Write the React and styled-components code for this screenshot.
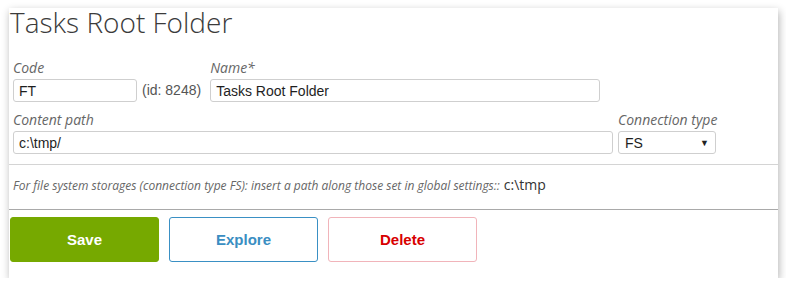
import React from 'react'
import styled, { createGlobalStyle } from 'styled-components';

const GlobalStyle = createGlobalStyle`
  body {
    margin: 0;
    background: #fff;
    font-family: "Open Sans", sans-serif;
  }
`

const App = () => {
  return (
    <>
      <GlobalStyle />
      <Card>
        <Title>Tasks Root Folder</Title>

        <FieldRow top="22px">
          <Field width="124px">
            <Label>Code</Label>
            <TextInput defaultValue='FT' readOnly />
          </Field>
          <IdNote>(id: 8248)</IdNote>
          <Field width="390px">
            <Label>Name*</Label>
            <TextInput defaultValue='Tasks Root Folder' readOnly />
          </Field>
        </FieldRow>

        <FieldRow top="8px">
          <Field width="600px">
            <Label>Content path</Label>
            <TextInput defaultValue='c:\tmp/' readOnly />
          </Field>
          <Field width="98px">
            <Label>Connection type</Label>
            <SelectBox>
              <span>FS</span>
              <Caret>▼</Caret>
            </SelectBox>
          </Field>
        </FieldRow>

        <Divider color="#d4d4d4" top="10px" />

        <Hint>
          <em>For file system storages (connection type FS): insert a path along those set in global settings::</em>
          <HintValue>c:\tmp</HintValue>
        </Hint>

        <Divider color="#a9a9a9" top="0" />

        <Actions>
          <Button bg="#76a900" border="#76a900" color="#fff">Save</Button>
          <Button border="#3a90c4" color="#3a8ec2">Explore</Button>
          <Button border="#f1b4ba" color="#d80000">Delete</Button>
        </Actions>
      </Card>
    </>
  )
}

const Card = styled.div`
  box-sizing: border-box;
  margin: 8px 0 0 9px;
  width: 769px;
  height: 270px;
  background: #fff;
  box-shadow: 1px 3px 8px rgba(0, 0, 0, 0.3);
`

const Title = styled.h1`
  margin: 0;
  padding-left: 1px;
  font-family: "Open Sans", sans-serif;
  font-weight: 300;
  font-size: 28px;
  line-height: 28px;
  color: #3b3b3b;
`

const FieldRow = styled.div`
  display: flex;
  align-items: flex-end;
  gap: 5px;
  padding: 0 4px;
  margin-top: ${({ top }) => top};
`

const Field = styled.div`
  display: flex;
  flex-direction: column;
  flex-shrink: 0;
  width: ${({ width }) => width};
`

const Label = styled.label`
  font-family: "Open Sans", sans-serif;
  font-style: italic;
  font-size: 14px;
  line-height: 20px;
  color: #666;
  white-space: nowrap;
  margin-bottom: 1px;
`

const TextInput = styled.input`
  box-sizing: border-box;
  width: 100%;
  height: 23px;
  margin: 0;
  padding: 0 5px;
  border: 1px solid #cfcfcf;
  border-radius: 3px;
  font-family: "Liberation Sans", Arial, sans-serif;
  font-size: 14px;
  color: #1e1e1e;
  outline: none;
`

const IdNote = styled.span`
  font-family: "Liberation Sans", Arial, sans-serif;
  font-size: 14px;
  line-height: 23px;
  color: #555;
  white-space: nowrap;
  margin-right: 4px;
`

const SelectBox = styled.div`
  box-sizing: border-box;
  height: 23px;
  display: flex;
  align-items: center;
  justify-content: space-between;
  padding: 0 6px 0 6px;
  border: 1px solid #cfcfcf;
  border-radius: 3px;
  font-family: "Liberation Sans", Arial, sans-serif;
  font-size: 14px;
  color: #1e1e1e;
`

const Caret = styled.span`
  font-size: 9px;
  color: #222;
`

const Divider = styled.hr`
  margin: ${({ top }) => top} 0 0;
  border: 0;
  border-top: 1px solid ${({ color }) => color};
`

const Hint = styled.div`
  box-sizing: border-box;
  height: 44px;
  padding: 9px 4px 0;
  line-height: 20px;
  white-space: nowrap;
  em {
    font-size: 12px;
    color: #666;
  }
`

const HintValue = styled.span`
  font-size: 14px;
  color: #333;
  margin-left: 4px;
`

const Actions = styled.div`
  display: flex;
  gap: 10px;
  padding: 7px 0 0 1px;
`

const Button = styled.button`
  box-sizing: border-box;
  width: 149px;
  height: 45px;
  border: 1px solid ${({ border }) => border};
  border-radius: 3px;
  background: ${({ bg }) => bg || '#fff'};
  color: ${({ color }) => color};
  font-family: "Liberation Sans", Arial, sans-serif;
  font-weight: bold;
  font-size: 15px;
  cursor: pointer;
`

export default App
